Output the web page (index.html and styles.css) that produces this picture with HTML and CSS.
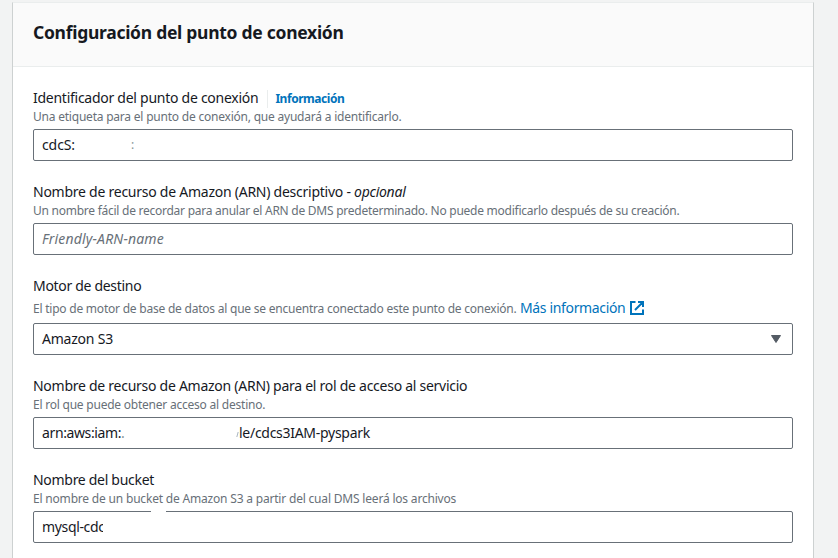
FILE: index.html
```
<!DOCTYPE html>
<html lang="es">
<head>
<meta charset="utf-8">
<title>Configuración del punto de conexión</title>
<link rel="stylesheet" href="styles.css">
</head>
<body>
<main class="panel">
  <header class="panel-header"><h2>Configuración del punto de conexión</h2></header>
  <div class="panel-body">
    <section class="field">
      <div class="label">Identificador del punto de conexión<a class="info">Información</a></div>
      <div class="hint hint-id">Una etiqueta para el punto de conexión, que ayudará a identificarlo.</div>
      <div class="input"><span class="value-id">cdcS:</span><span class="dots">:</span></div>
    </section>
    <section class="field">
      <div class="label label-arn">Nombre de recurso de Amazon (ARN) descriptivo - <i>opcional</i></div>
      <div class="hint hint-arn">Un nombre fácil de recordar para anular el ARN de DMS predeterminado. No puede modificarlo después de su creación.</div>
      <div class="input"><span class="placeholder">Friendly-ARN-name</span></div>
    </section>
    <section class="field">
      <div class="label label-engine">Motor de destino</div>
      <div class="hint hint-link"><span>El tipo de motor de base de datos al que se encuentra conectado este punto de conexión.</span><a class="more">Más información</a><svg class="external" viewBox="0 0 16 16"><path d="M6.5 2H2v12h12V9.5M9 2h5v5M14 2 6 10"/></svg></div>
      <div class="input select"><span>Amazon S3</span><svg class="caret" viewBox="0 0 12 10"><path d="M1.5 1.5h9L6 8.5z"/></svg></div>
    </section>
    <section class="field">
      <div class="label">Nombre de recurso de Amazon (ARN) para el rol de acceso al servicio</div>
      <div class="hint">El rol que puede obtener acceso al destino.</div>
      <div class="input"><span class="value-arn">arn:aws:iam:<span class="faint">.</span></span><span class="sliver"></span><span class="value-role">le/cdcs3IAM-pyspark</span></div>
    </section>
    <section class="field">
      <div class="label label-bucket">Nombre del bucket</div>
      <div class="hint hint-bucket">El nombre de un bucket de Amazon S3 a partir del cual DMS leerá los archivos</div>
      <div class="input gap-border"><span class="value-bucket">mysql-cdc</span></div>
    </section>
  </div>
</main>
</body>
</html>
```
FILE: styles.css
```
* { box-sizing: border-box; }
body {
  margin: 0;
  height: 558px;
  overflow: hidden;
  background: #f2f3f3;
  color: #16191f;
  font: 14px/22px "Noto Sans", sans-serif;
}
.panel {
  width: 802px;
  height: 580px;
  margin: 2px 0 0 12px;
  background: #fff;
  border: 1px solid #cdd1d1;
  border-top-color: #eaeded;
}
.panel-header {
  height: 64px;
  padding: 15px 20px 0;
  background: #fafafa;
  border-bottom: 1px solid #eaeded;
}
h2 {
  margin: 0;
  font-size: 17.5px;
  line-height: 28px;
  font-weight: 700;
  letter-spacing: -0.28px;
}
.panel-body {
  display: flex;
  flex-direction: column;
  gap: 20px;
  padding: 20px;
}
.label { height: 22px; letter-spacing: -0.265px; white-space: nowrap; }
.label-arn { letter-spacing: -0.25px; }
.label-engine { letter-spacing: -0.31px; }
.label-bucket { letter-spacing: -0.295px; }
.info {
  display: inline-block;
  height: 18px;
  margin-left: 9px;
  padding-left: 7px;
  border-left: 1px solid #eaeded;
  color: #0073bb;
  font-size: 12px;
  line-height: 18px;
  font-weight: 700;
  letter-spacing: -0.45px;
}
.hint {
  height: 16px;
  color: #687078;
  font-size: 12px;
  line-height: 16px;
  letter-spacing: -0.225px;
  white-space: nowrap;
}
.hint-id { letter-spacing: -0.215px; }
.hint-arn { letter-spacing: -0.255px; }
.hint-bucket { letter-spacing: -0.19px; }
.hint-link { display: flex; height: 22px; line-height: 24px; }
.more {
  margin-left: 3.5px;
  color: #0073bb;
  font-size: 14px;
  line-height: 22px;
  letter-spacing: -0.35px;
}
.external { width: 16px; height: 16px; margin: 3px 0 0 4px; fill: none; stroke: #0073bb; stroke-width: 2; }
.input {
  position: relative;
  display: flex;
  align-items: center;
  height: 32px;
  margin-top: 4px;
  padding: 0 8px;
  border: 1px solid #687078;
  border-radius: 2px;
  letter-spacing: -0.22px;
  white-space: nowrap;
}
.placeholder { color: #687078; font-style: italic; letter-spacing: 0.17px; }
.select { justify-content: space-between; padding-right: 10px; }
.caret { width: 12px; height: 10px; fill: #545b64; stroke: #545b64; stroke-linejoin: round; }
.value-id { width: 34px; letter-spacing: -0.1px; }
.dots { width: 4px; margin-left: 55px; color: #879596; font-size: 12px; }
.value-arn { width: 84px; letter-spacing: -0.38px; }
.faint { color: #879596; }
.sliver { width: 1px; height: 5px; margin: 3px 1px 0 111px; background: #a9b5c0; transform: skewX(-15deg); }
.value-role { letter-spacing: -0.28px; }
.value-bucket { letter-spacing: -0.35px; }
.gap-border::before {
  content: "";
  position: absolute;
  top: -1px;
  left: 117px;
  width: 15px;
  height: 1px;
  background: #fff;
}
.gap-border::after {
  content: "";
  position: absolute;
  top: 6px;
  left: 69px;
  width: 9px;
  height: 18px;
  background: #fff;
}
```
